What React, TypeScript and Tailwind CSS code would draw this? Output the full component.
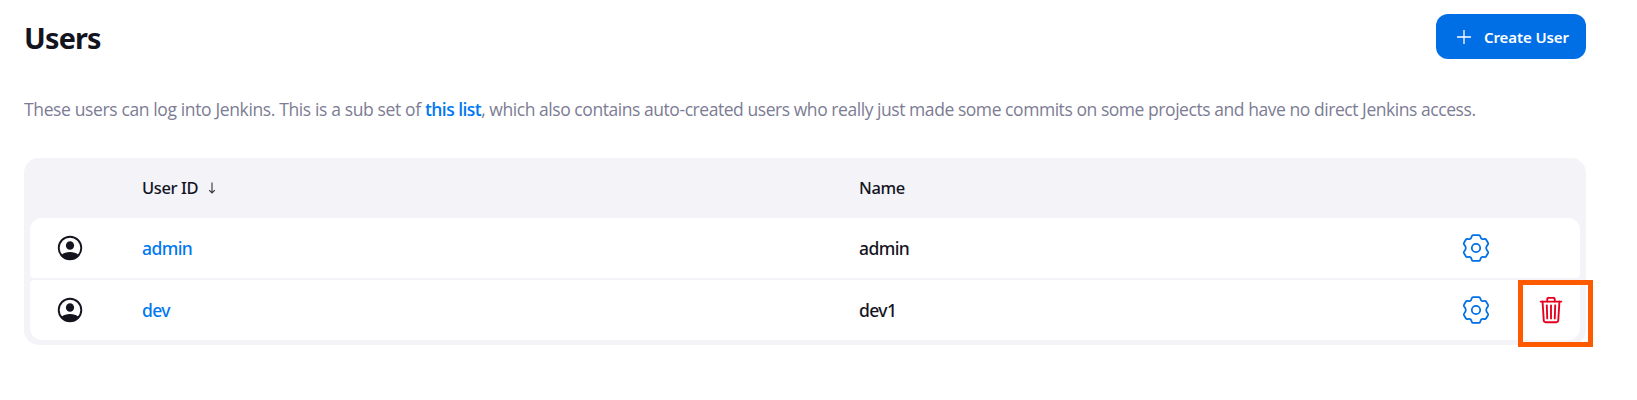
import React from "react";

const users = [
  { id: "admin", name: "admin", removable: false },
  { id: "dev", name: "dev1", removable: true },
];

function PersonIcon() {
  return (
    <svg viewBox="0 0 26 26" className="h-[26px] w-[26px] text-[#14141f]" fill="none">
      <circle cx="13" cy="13" r="11.3" stroke="currentColor" strokeWidth="1.9" />
      <ellipse cx="13" cy="10.5" rx="4.1" ry="4.3" fill="currentColor" />
      <path d="M4.600 19.800C6.600 17.900 9.600 17 13 17s6.400.9 8.400 2.800A11.600 11.600 0 0 1 13 24.800a11.600 11.600 0 0 1-8.400-5z" fill="currentColor" />
    </svg>
  );
}

function GearIcon() {
  return (
    <svg viewBox="-14 -14 28 28" className="h-7 w-7" fill="none" stroke="#006fe6" strokeWidth="1.75" strokeLinejoin="round" strokeLinecap="round">
      <circle r="4.2" />
      <path d="M-3-12.900H3Q3.900-12.900 4.200-11.700Q4.800-9.200 6.200-8.900Q7-8.700 8.400-9.100Q9.600-9.300 10.200-8.300L12-5.200Q12.600-4 11.600-3.100Q10.200-1.600 10.200 0Q10.200 1.600 11.600 3.100Q12.600 4 12 5.200L10.200 8.300Q9.600 9.300 8.400 9.100Q7 8.700 6.200 8.900Q4.800 9.200 4.200 11.700Q3.900 12.900 3 12.900H-3Q-3.900 12.900-4.200 11.700Q-4.800 9.200-6.200 8.900Q-7 8.700-8.400 9.100Q-9.600 9.300-10.200 8.300L-12 5.200Q-12.600 4-11.600 3.100Q-10.200 1.600-10.200 0Q-10.200-1.600-11.600-3.100Q-12.600-4-12-5.200L-10.200-8.300Q-9.600-9.300-8.400-9.100Q-7-8.700-6.200-8.900Q-4.800-9.200-4.200-11.700Q-3.900-12.900-3-12.900Z" />
    </svg>
  );
}

function TrashIcon() {
  return (
    <svg viewBox="0 0 512 512" className="h-[30px] w-[30px]" fill="none" stroke="#e6001f" strokeWidth="32" strokeLinecap="round" strokeLinejoin="round">
      <path d="M112 112l20 320c.95 18.490 14.400 32 32 32h184c17.670 0 30.870-13.510 32-32l20-320" />
      <path d="M80 112h352" />
      <path d="M192 112V72a23.930 23.930 0 0 1 24-24h80a23.930 23.930 0 0 1 24 24v40M256 176v224M184 176l8 224M328 176l-8 224" />
    </svg>
  );
}

export default function App() {
  return (
    <main className="h-[400px] w-full overflow-hidden bg-white pr-[51px] pl-6 pt-3.5 font-['Noto_Sans','Open_Sans',sans-serif] text-[#14141f]">
      <header className="flex h-[45px] items-start justify-between">
        <h1 className="pt-1 text-[28.8px] leading-[40px] font-bold tracking-[-0.8px]">Users</h1>
        <button className="flex h-[45px] w-[150px] items-center rounded-xl bg-[#006fe6] pl-[21px] text-white">
          <svg viewBox="0 0 14 14" className="h-3.5 w-3.5" stroke="currentColor" strokeWidth="1.3">
            <path d="M7 0v14M0 7h14" />
          </svg>
          <span className="ml-[13px] pt-px text-[15px] font-semibold tracking-[-0.1px] whitespace-nowrap">Create User</span>
        </button>
      </header>

      <p className="mt-9 h-[63px] font-['Open_Sans','Noto_Sans',sans-serif] text-[17.500px] leading-[28px] font-normal tracking-[-0.370px] whitespace-nowrap text-[#7c7c94]">
        These users can log into Jenkins. This is a sub set of{" "}
        <a className="font-semibold tracking-[-0.550px] text-[#0078f0]">this list</a>
        <span className="tracking-[-0.445px]">, which also contains auto-created users who really just made some commits on some projects and have no direct Jenkins access.</span>
      </p>

      <section className="h-[187px] rounded-[15px] bg-[#f3f3f8] px-1.5 pb-[5px]">
        <div className="flex h-[60px] items-center text-[16.500px] font-medium tracking-[-0.4px]">
          <div className="flex w-[717px] items-center pl-28">
            User ID
            <svg viewBox="0 0 8 12" className="ml-2.5 h-3 w-2" fill="none" stroke="#33333e" strokeWidth="1.1">
              <path d="M4 0.500v10.500M1.200 8.200L4 11l2.800-2.800" />
            </svg>
          </div>
          <div className="pl-28">Name</div>
        </div>
        <div className="flex flex-col gap-0.5">
          {users.map((user) => (
            <div
              key={user.id}
              className="flex h-[60px] items-center rounded-[4px] bg-white text-[17.500px] font-medium tracking-[-0.6px] first:rounded-t-xl last:rounded-b-xl"
            >
              <div className="w-[112px] pl-[27px]"><PersonIcon /></div>
              <a className="w-[717px] pt-px text-[#0078f0]">{user.id}</a>
              <span className="w-[603px] pt-px">{user.name}</span>
              <GearIcon />
              {user.removable && (
                <div className="relative ml-[46px]">
                  <TrashIcon />
                  <div className="absolute top-[-15px] left-[-18px] h-[67px] w-[75px] border-[5px] border-[#ff5a00]" />
                </div>
              )}
            </div>
          ))}
        </div>
      </section>
    </main>
  );
}
